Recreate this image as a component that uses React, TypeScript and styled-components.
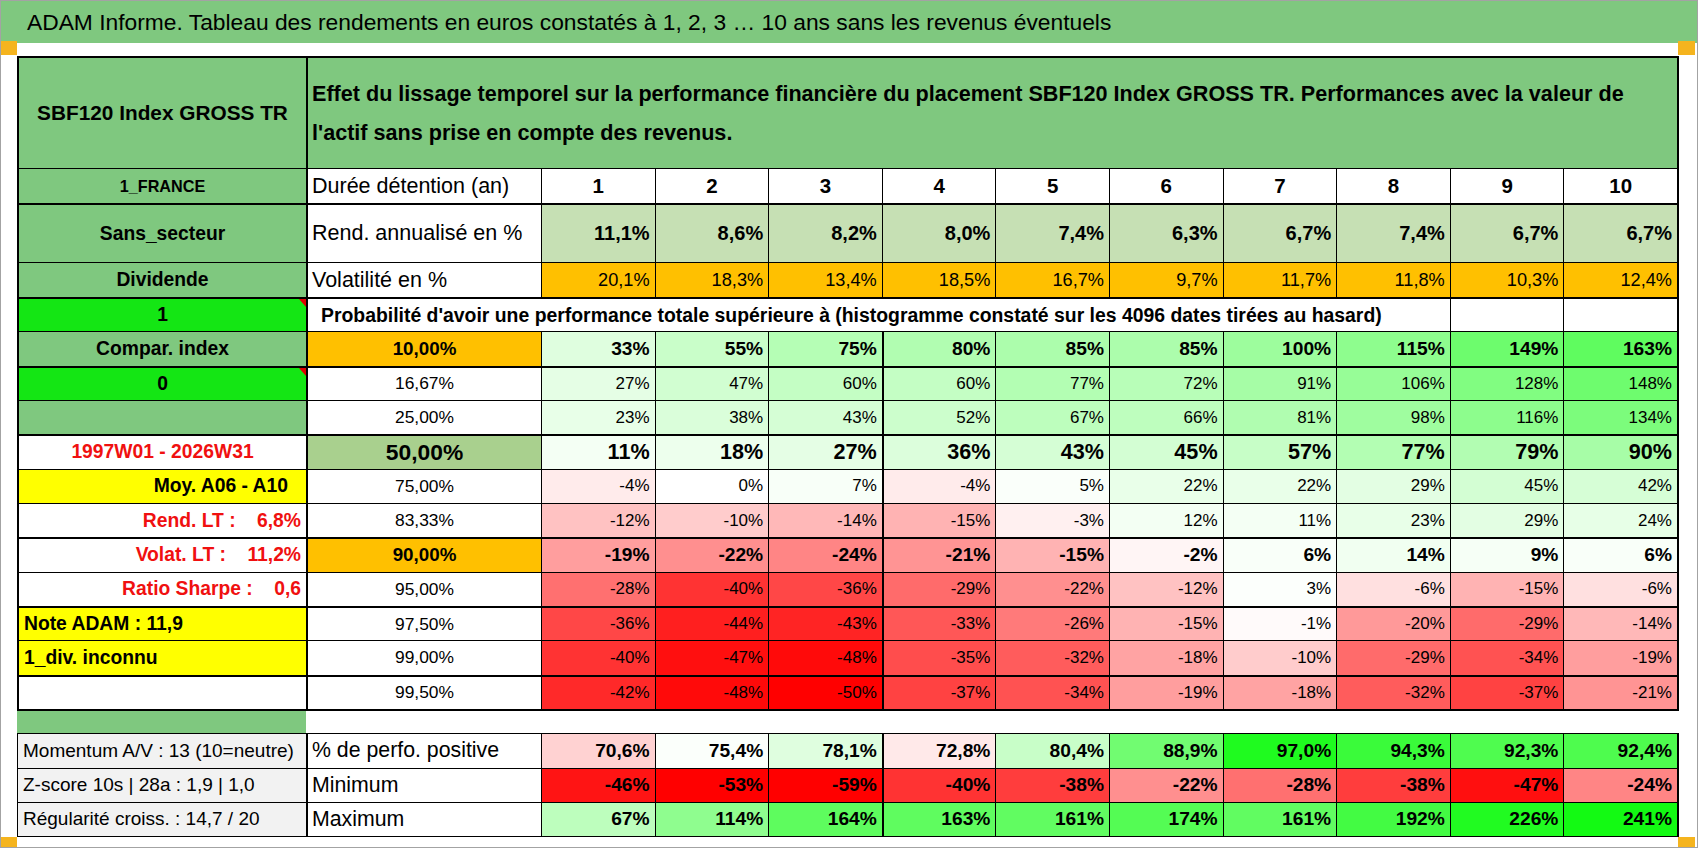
import React from 'react';
import styled, { createGlobalStyle } from 'styled-components';

const FONT = `"Liberation Sans", Arial, sans-serif`;

const GlobalStyle = createGlobalStyle`
  html, body { margin: 0; padding: 0; background: #fff; }
  body { font-family: ${FONT}; color: #000; }
  *, *::before, *::after { box-sizing: border-box; }
`;

const C = {
  header: '#7fc87f',
  bright: '#14e614',
  rend: '#c6e0b4',
  orange: '#ffc000',
  mid: '#a9d08e',
  yellow: '#ffff00',
  red: '#f01010',
  footGray: '#f2f2f2',
  corner: '#f5b41e',
};

const mix = (t: number, r: number, g: number, b: number) => {
  const k = Math.max(0, Math.min(1, t));
  const ch = (c: number) => Math.round(255 + (c - 255) * k);
  return `rgb(${ch(r)}, ${ch(g)}, ${ch(b)})`;
};
const heat = (v: number, mid = 0, neg = 50, pos = 260) =>
  v >= mid ? mix((v - mid) / pos, 0, 250, 0) : mix((mid - v) / neg, 255, 0, 0);

/* ---------- frame ---------- */
const Page = styled.div`
  position: relative;
  width: 1698px;
  height: 848px;
  border: 1px solid #a3a3a3;
  background: #fff;
  overflow: hidden;
`;

const TitleBar = styled.header`
  height: 42px;
  display: flex;
  align-items: center;
  padding-left: 26px;
  background: ${C.header};
  font-size: 22.8px;
  white-space: nowrap;
`;

const Corner = styled.span<{ $x: 'left' | 'right'; $y: 'top' | 'bottom' }>`
  position: absolute;
  width: 17px;
  background: ${C.corner};
  ${(p) => (p.$x === 'left' ? 'left: -1px;' : 'right: 2px;')}
  ${(p) => (p.$y === 'top' ? 'top: 40px; height: 14px;' : 'bottom: 0; height: 10px;')}
`;

const Sheet = styled.main`
  padding: 13px 17px 0 16px;
`;

const MainGrid = styled.section`
  display: grid;
  width: 1662px;
  grid-template-columns: 287px 235px repeat(10, 1fr);
  grid-template-rows: 110px 35px 59px 35px repeat(12, 34.33px);
  border: 2px solid #000;
`;

const Spacer = styled.div`
  width: 289px;
  height: 22px;
  background: ${C.header};
`;

const FootGrid = styled.section`
  display: grid;
  width: 1662px;
  height: 104px;
  grid-template-columns: 288px 235px repeat(10, 1fr);
  grid-template-rows: repeat(3, 1fr);
  border: 1px solid #000;
  border-right-width: 2px;
`;

/* ---------- cells ---------- */
type CellProps = {
  $bg?: string;
  $top?: number;
  $left?: number;
  $span?: number;
};

const Cell = styled.div<CellProps>`
  position: relative;
  display: flex;
  align-items: center;
  min-width: 0;
  white-space: pre;
  background: ${(p) => p.$bg ?? '#fff'};
  border-top: ${(p) => p.$top ?? 1}px solid #000;
  border-left: ${(p) => p.$left ?? 1}px solid #000;
  grid-column: ${(p) => (p.$span ? `span ${p.$span}` : 'auto')};
`;

const SideCell = styled(Cell)<{ $align?: string; $color?: string; $size?: number; $pr?: number }>`
  justify-content: ${(p) => p.$align ?? 'center'};
  padding: 0 ${(p) => p.$pr ?? 5}px 0 5px;
  font-weight: 700;
  font-size: ${(p) => p.$size ?? 19.3}px;
  color: ${(p) => p.$color ?? '#000'};
`;

const HeadTitle = styled(Cell)`
  justify-content: center;
  font-weight: 700;
  font-size: 20.8px;
`;

const Description = styled(Cell)`
  padding-left: 4px;
  font-weight: 700;
  font-size: 21.6px;
  line-height: 39px;
  white-space: nowrap;
`;

const LabelCell = styled(Cell)`
  padding-left: 4px;
  font-size: 21.5px;
`;

const PctCell = styled(Cell)<{ $size: number; $bold?: boolean }>`
  justify-content: center;
  font-size: ${(p) => p.$size}px;
  font-weight: ${(p) => (p.$bold ? 700 : 400)};
`;

const ColNum = styled(Cell)`
  justify-content: center;
  font-weight: 700;
  font-size: 20.5px;
`;

const ValueCell = styled(Cell)<{ $size: number; $bold?: boolean }>`
  justify-content: flex-end;
  padding-right: 5px;
  font-size: ${(p) => p.$size}px;
  font-weight: ${(p) => (p.$bold ? 700 : 400)};
`;

const ProbaTitle = styled(Cell)`
  padding-left: 13px;
  font-weight: 700;
  font-size: 19.4px;
`;

const FootSide = styled(Cell)`
  padding-left: 5px;
  font-size: 19px;
  background: ${C.footGray};
`;

const FootLabel = styled(Cell)`
  padding-left: 4px;
  font-size: 21.3px;
`;

const CommentMark = styled.span`
  position: absolute;
  top: 0;
  right: 0;
  width: 0;
  height: 0;
  border-top: 8px solid #e00000;
  border-left: 7px solid transparent;
`;

/* ---------- data ---------- */
const years = [1, 2, 3, 4, 5, 6, 7, 8, 9, 10];
const rend = ['11,1%', '8,6%', '8,2%', '8,0%', '7,4%', '6,3%', '6,7%', '7,4%', '6,7%', '6,7%'];
const vol = ['20,1%', '18,3%', '13,4%', '18,5%', '16,7%', '9,7%', '11,7%', '11,8%', '10,3%', '12,4%'];

type SideSpec = {
  text: string;
  bg?: string;
  color?: string;
  align?: string;
  pr?: number;
  mark?: boolean;
};

type Kind = 'bold' | 'regular' | 'median';

type ProbaRow = {
  pct: string;
  values: number[];
  kind: Kind;
  pctBg?: string;
  sideSpec: SideSpec;
  top: number;
};

const side = (s: SideSpec, top: number) => (
  <SideCell $left={0} $top={top} $bg={s.bg} $color={s.color} $align={s.align} $pr={s.pr}>
    {s.text}
    {s.mark && <CommentMark />}
  </SideCell>
);

const probaRows: ProbaRow[] = [
  { pct: '10,00%', values: [33, 55, 75, 80, 85, 85, 100, 115, 149, 163], kind: 'bold', pctBg: C.orange, sideSpec: { text: 'Compar. index', bg: C.header }, top: 1 },
  { pct: '16,67%', values: [27, 47, 60, 60, 77, 72, 91, 106, 128, 148], kind: 'regular', sideSpec: { text: '0', bg: C.bright, mark: true }, top: 2 },
  { pct: '25,00%', values: [23, 38, 43, 52, 67, 66, 81, 98, 116, 134], kind: 'regular', sideSpec: { text: '', bg: C.header }, top: 1 },
  { pct: '50,00%', values: [11, 18, 27, 36, 43, 45, 57, 77, 79, 90], kind: 'median', pctBg: C.mid, sideSpec: { text: '1997W01 - 2026W31', color: C.red }, top: 2 },
  { pct: '75,00%', values: [-4, 0, 7, -4, 5, 22, 22, 29, 45, 42], kind: 'regular', sideSpec: { text: 'Moy. A06 - A10', bg: C.yellow, align: 'flex-end', pr: 18 }, top: 1 },
  { pct: '83,33%', values: [-12, -10, -14, -15, -3, 12, 11, 23, 29, 24], kind: 'regular', sideSpec: { text: 'Rend. LT :    6,8%', color: C.red, align: 'flex-end' }, top: 1 },
  { pct: '90,00%', values: [-19, -22, -24, -21, -15, -2, 6, 14, 9, 6], kind: 'bold', pctBg: C.orange, sideSpec: { text: 'Volat. LT :    11,2%', color: C.red, align: 'flex-end' }, top: 2 },
  { pct: '95,00%', values: [-28, -40, -36, -29, -22, -12, 3, -6, -15, -6], kind: 'regular', sideSpec: { text: 'Ratio Sharpe :    0,6', color: C.red, align: 'flex-end' }, top: 1 },
  { pct: '97,50%', values: [-36, -44, -43, -33, -26, -15, -1, -20, -29, -14], kind: 'regular', sideSpec: { text: 'Note ADAM : 11,9', bg: C.yellow, align: 'flex-start' }, top: 2 },
  { pct: '99,00%', values: [-40, -47, -48, -35, -32, -18, -10, -29, -34, -19], kind: 'regular', sideSpec: { text: '1_div. inconnu', bg: C.yellow, align: 'flex-start' }, top: 1 },
  { pct: '99,50%', values: [-42, -48, -50, -37, -34, -19, -18, -32, -37, -21], kind: 'regular', sideSpec: { text: '' }, top: 2 },
];

const pctSize: Record<Kind, number> = { bold: 18.8, regular: 17.4, median: 22.8 };
const valSize: Record<Kind, number> = { bold: 19.2, regular: 17, median: 21.6 };

const positive = [70.6, 75.4, 78.1, 72.8, 80.4, 88.9, 97.0, 94.3, 92.3, 92.4];
const minimum = [-46, -53, -59, -40, -38, -22, -28, -38, -47, -24];
const maximum = [67, 114, 164, 163, 161, 174, 161, 192, 226, 241];

const fmt1 = (v: number) => `${v.toFixed(1).replace('.', ',')}%`;

export default function App() {
  return (
    <>
      <GlobalStyle />
      <Page>
        <TitleBar>
          ADAM Informe. Tableau des rendements en euros constatés à 1, 2, 3 … 10 ans sans les revenus éventuels
        </TitleBar>
        <Corner $x="left" $y="top" />
        <Corner $x="right" $y="top" />
        <Corner $x="left" $y="bottom" />
        <Corner $x="right" $y="bottom" />

        <Sheet>
          <MainGrid>
            {/* header */}
            <HeadTitle $left={0} $top={0} $bg={C.header}>SBF120 Index GROSS TR</HeadTitle>
            <Description $left={2} $top={0} $span={11} $bg={C.header}>
              Effet du lissage temporel sur la performance financière du placement SBF120 Index GROSS TR. Performances avec la valeur de
              <br />
              l'actif sans prise en compte des revenus.
            </Description>

            {/* years */}
            <SideCell $left={0} $top={1} $bg={C.header} $size={16.2}>1_FRANCE</SideCell>
            <LabelCell $left={2} $top={1}>Durée détention (an)</LabelCell>
            {years.map((y) => (
              <ColNum key={y} $top={1}>{y}</ColNum>
            ))}

            {/* rendement */}
            <SideCell $left={0} $top={2} $bg={C.header}>Sans_secteur</SideCell>
            <LabelCell $left={2} $top={2}>Rend. annualisé en %</LabelCell>
            {rend.map((r, i) => (
              <ValueCell key={i} $top={2} $bg={C.rend} $size={20} $bold>{r}</ValueCell>
            ))}

            {/* volatilité */}
            <SideCell $left={0} $top={1} $bg={C.header}>Dividende</SideCell>
            <LabelCell $left={2} $top={1}>Volatilité en %</LabelCell>
            {vol.map((r, i) => (
              <ValueCell key={i} $top={1} $bg={C.orange} $size={18.2}>{r}</ValueCell>
            ))}

            {/* probabilité title */}
            {side({ text: '1', bg: C.bright, mark: true }, 2)}
            <ProbaTitle $left={2} $top={2} $span={9}>
              Probabilité d'avoir une performance totale supérieure à (histogramme constaté sur les 4096 dates tirées au hasard)
            </ProbaTitle>
            <Cell $top={2} />
            <Cell $top={2} />

            {probaRows.map((row) => (
              <React.Fragment key={row.pct}>
                {side(row.sideSpec, row.top)}
                <PctCell $left={2} $top={row.top} $bg={row.pctBg} $size={pctSize[row.kind]} $bold={row.kind !== 'regular'}>
                  {row.pct}
                </PctCell>
                {row.values.map((v, i) => (
                  <ValueCell
                    key={i}
                    $top={row.top}
                    $left={i === 3 ? 2 : 1}
                    $bg={heat(v)}
                    $size={valSize[row.kind]}
                    $bold={row.kind !== 'regular'}
                  >
                    {`${v}%`}
                  </ValueCell>
                ))}
              </React.Fragment>
            ))}
          </MainGrid>

          <Spacer />

          <FootGrid>
            <FootSide $left={0} $top={0}>Momentum A/V : 13 (10=neutre)</FootSide>
            <FootLabel $left={2} $top={0}>% de perfo. positive</FootLabel>
            {positive.map((v, i) => (
              <ValueCell key={i} $top={0} $left={i === 3 ? 2 : 1} $bg={heat(v, 75, 25, 25)} $size={19.2} $bold>{fmt1(v)}</ValueCell>
            ))}

            <FootSide $left={0}>Z-score 10s | 28a : 1,9 | 1,0</FootSide>
            <FootLabel $left={2}>Minimum</FootLabel>
            {minimum.map((v, i) => (
              <ValueCell key={i} $left={i === 3 ? 2 : 1} $bg={heat(v)} $size={19.2} $bold>{`${v}%`}</ValueCell>
            ))}

            <FootSide $left={0}>Régularité croiss. : 14,7 / 20</FootSide>
            <FootLabel $left={2}>Maximum</FootLabel>
            {maximum.map((v, i) => (
              <ValueCell key={i} $left={i === 3 ? 2 : 1} $bg={heat(v)} $size={19.2} $bold>{`${v}%`}</ValueCell>
            ))}
          </FootGrid>
        </Sheet>
      </Page>
    </>
  );
}
